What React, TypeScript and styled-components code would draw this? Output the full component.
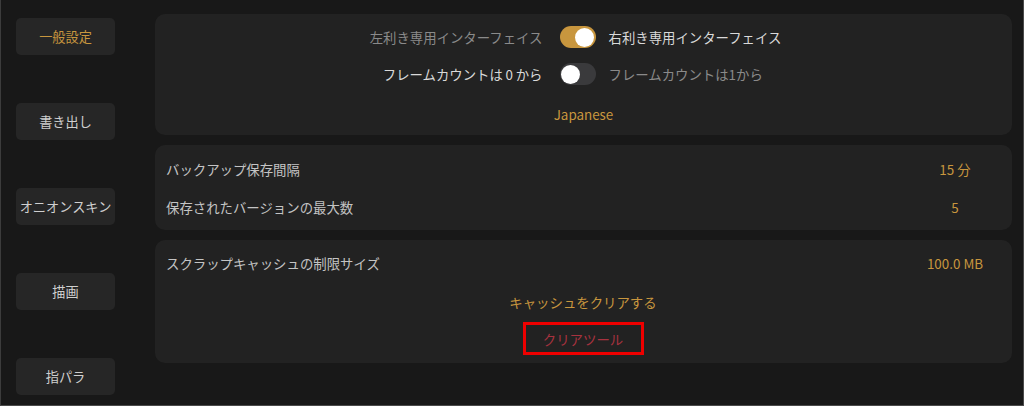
import React from "react";
import styled, { createGlobalStyle } from "styled-components";

const GlobalStyle = createGlobalStyle`
  html, body { margin: 0; padding: 0; background: #181818; }
  body { font-family: "Noto Sans CJK JP", "Noto Sans", sans-serif; }
  * { box-sizing: border-box; }
`;

const Frame = styled.div`
  width: 1024px;
  height: 406px;
  display: flex;
  background: #181818;
  border-left: 1px solid #3c3c3c;
  border-right: 1px solid #4a4a4a;
  border-bottom: 1px solid #4a4a4a;
  overflow: hidden;
`;

const Sidebar = styled.nav`
  width: 154px;
  flex: none;
  display: flex;
  flex-direction: column;
  gap: 48px;
  padding: 18px 0 0 15px;
`;

const SideButton = styled.div<{ $active?: boolean }>`
  width: 99px;
  height: 37px;
  border-radius: 5px;
  background: #262626;
  display: flex;
  align-items: center;
  justify-content: center;
  font-size: 13.2px;
  color: ${(p) => (p.$active ? "#c8963e" : "#cfcfcf")};
  white-space: nowrap;
`;

const Main = styled.main`
  flex: 1;
  display: flex;
  flex-direction: column;
  gap: 10px;
  padding: 14px 11px 0 0;
`;

const Panel = styled.section`
  background: #222222;
  border-radius: 10px;
`;

const ToggleArea = styled(Panel)`
  height: 121px;
  padding: 12px 16px 0 0;
  display: flex;
  flex-direction: column;
`;

const ToggleRow = styled.div`
  display: grid;
  grid-template-columns: 1fr auto 1fr;
  align-items: center;
  height: 22px;
  margin-bottom: 15px;
  font-size: 13.4px;
  white-space: nowrap;
`;

const Label = styled.span<{ $side: "left" | "right"; $bright?: boolean }>`
  text-align: ${(p) => (p.$side === "left" ? "right" : "left")};
  color: ${(p) => (p.$bright ? "#d9d9d9" : "#8a8a8a")};
`;

const Switch = styled.div<{ $on?: boolean }>`
  position: relative;
  width: 36px;
  height: 22px;
  border-radius: 11px;
  margin: 0 13px 0 17px;
  background: ${(p) => (p.$on ? "#c8963e" : "#3a3a3c")};
  &::after {
    content: "";
    position: absolute;
    top: 1.5px;
    left: ${(p) => (p.$on ? "15.5px" : "1.5px")};
    width: 19px;
    height: 19px;
    border-radius: 50%;
    background: #ffffff;
  }
`;

const LinkText = styled.div<{ $color?: string }>`
  text-align: center;
  font-size: 13.4px;
  line-height: 20px;
  color: ${(p) => p.$color ?? "#c8963e"};
`;

const LanguageLine = styled(LinkText)`
  margin-top: 4px;
  padding-left: 16px;
`;

const ListPanel = styled(Panel)`
  padding: 5px 12px 4px 11px;
  display: flex;
  flex-direction: column;
`;

const ValueRow = styled.div`
  display: grid;
  grid-template-columns: 1fr 90px;
  align-items: center;
  height: 38px;
  font-size: 13.4px;
`;

const RowLabel = styled.span`
  color: #c4c4c4;
`;

const RowValue = styled.span`
  color: #c8963e;
  text-align: center;
`;

const CachePanel = styled(ListPanel)`
  height: 123px;
  padding-top: 4px;
`;

const CacheAction = styled(LinkText)`
  margin-top: 10px;
`;

const ClearTool = styled.div`
  align-self: center;
  margin-top: 10px;
  width: 121px;
  height: 33px;
  border: 3px solid #ee0000;
  display: flex;
  align-items: center;
  justify-content: center;
  font-size: 13.4px;
  color: #a8323f;
`;

const sideItems = ["一般設定", "書き出し", "オニオンスキン", "描画", "指パラ"];

export default function App() {
  return (
    <>
      <GlobalStyle />
      <Frame>
        <Sidebar>
          {sideItems.map((s, i) => (
            <SideButton key={s} $active={i === 0}>
              {s}
            </SideButton>
          ))}
        </Sidebar>
        <Main>
          <ToggleArea>
            <ToggleRow>
              <Label $side="left">左利き専用インターフェイス</Label>
              <Switch $on />
              <Label $side="right" $bright>
                右利き専用インターフェイス
              </Label>
            </ToggleRow>
            <ToggleRow>
              <Label $side="left" $bright>
                フレームカウントは{"\u2009"}0{"\u2009"}から
              </Label>
              <Switch />
              <Label $side="right">フレームカウントは1から</Label>
            </ToggleRow>
            <LanguageLine>Japanese</LanguageLine>
          </ToggleArea>
          <ListPanel>
            <ValueRow>
              <RowLabel>バックアップ保存間隔</RowLabel>
              <RowValue>15 分</RowValue>
            </ValueRow>
            <ValueRow>
              <RowLabel>保存されたバージョンの最大数</RowLabel>
              <RowValue>5</RowValue>
            </ValueRow>
          </ListPanel>
          <CachePanel>
            <ValueRow>
              <RowLabel>スクラップキャッシュの制限サイズ</RowLabel>
              <RowValue>100.0 MB</RowValue>
            </ValueRow>
            <CacheAction>キャッシュをクリアする</CacheAction>
            <ClearTool>クリアツール</ClearTool>
          </CachePanel>
        </Main>
      </Frame>
    </>
  );
}
